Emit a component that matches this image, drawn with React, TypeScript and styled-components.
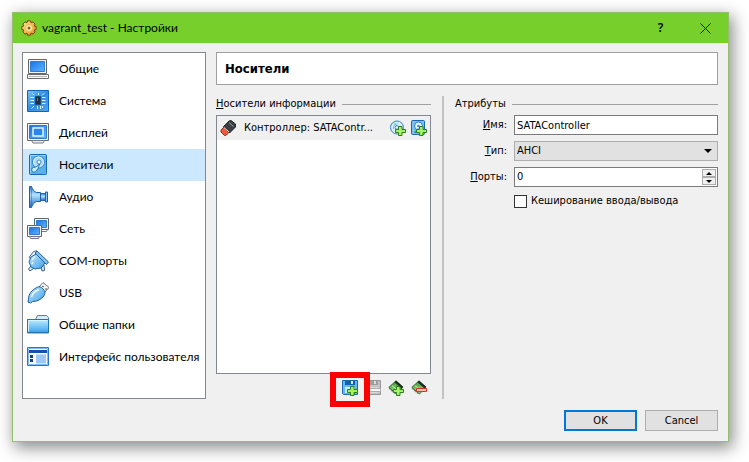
import React, { useState } from "react";
import styled, { createGlobalStyle, css } from "styled-components";

const uiFont = '"DejaVu Sans Condensed", "DejaVu Sans", sans-serif';
const menuFont = 'Lato, "Noto Sans", sans-serif';

const GlobalStyle = createGlobalStyle`
  *, *::before, *::after { box-sizing: border-box; }
  body { margin: 0; background: #fff; }
  svg { display: block; flex: none; }
`;

const Page = styled.div`
  display: flex;
  min-height: 100vh;
  padding: 12px 20px 20px 12px;
`;

const Dialog = styled.section`
  flex: 1;
  min-width: 0;
  display: flex;
  flex-direction: column;
  border: 1px solid #93bf6f;
  background: #f0f0f0;
  box-shadow: 3px 5px 15px 1px rgba(0, 0, 0, 0.45);
  color: #000;
  font: 11px/16px ${uiFont};
`;

const TitleBar = styled.header`
  display: flex;
  align-items: center;
  height: 30px;
  padding-left: 8px;
  background: #76cf2b;
`;

const Title = styled.h1`
  flex: 1;
  margin: 0 0 0 5px;
  font: 12px/16px ${menuFont};
`;

const CaptionButton = styled.button`
  display: grid;
  place-items: center;
  width: 45px;
  height: 30px;
  padding: 0;
  border: 0;
  background: transparent;
  font: 600 12px/16px "Noto Sans", sans-serif;
`;

const Body = styled.div`
  flex: 1;
  display: grid;
  grid-template-columns: 184px minmax(0, 1fr);
  gap: 10px;
  padding: 9px 10px 11px 9px;
`;

const Categories = styled.nav`
  border: 1px solid #828790;
  background: #fff;
`;

const Category = styled.a<{ $active?: boolean }>`
  display: flex;
  align-items: center;
  gap: 10px;
  height: 32px;
  padding-left: 4px;
  background: ${(p) => (p.$active ? "#cce8ff" : "transparent")};
  color: #000;
  font: 12px/16px ${menuFont};
  text-decoration: none;
  white-space: nowrap;
`;

const Settings = styled.main`
  display: flex;
  flex-direction: column;
  gap: 11px;
  min-width: 0;
`;

const PageName = styled.h2`
  height: 33px;
  margin: 0;
  padding: 0 8px;
  border: 1px solid #a0a0a0;
  background: #fff;
  font: bold 13px/32px ${uiFont};
`;

const Panes = styled.div`
  flex: 1;
  display: grid;
  grid-template-columns: 215px 2px minmax(0, 1fr);
  column-gap: 11px;
`;

const Divider = styled.div`
  background: #c3c3c3;
`;

const Pane = styled.div`
  display: flex;
  flex-direction: column;
  min-width: 0;
`;

const PaneTitle = styled.h3`
  display: flex;
  align-items: center;
  gap: 6px;
  height: 16px;
  margin: 0 0 3px;
  font: 11px/16px ${uiFont};
  white-space: nowrap;

  &::after {
    content: "";
    flex: 1;
    height: 1px;
    background: #a0a0a0;
  }
`;

const Tree = styled.div`
  flex: 1;
  border: 1px solid #828790;
  background: #fff;
`;

const TreeRow = styled.div`
  display: flex;
  align-items: center;
  height: 24px;
  padding: 0 3px;
  background: #f0f0f0;
`;

const TreeText = styled.span`
  flex: 1;
  margin-left: 8px;
  white-space: nowrap;
`;

const IconButton = styled.button<{ $marked?: boolean }>`
  position: relative;
  width: 16px;
  height: 16px;
  padding: 0;
  border: 0;
  background: transparent;

  & + & { margin-left: 5px; }

  ${(p) =>
    p.$marked &&
    css`
      z-index: 1;
      &::after {
        content: "";
        position: absolute;
        inset: -8px -12px -11px;
        border: 6px solid #fe0000;
      }
    `}
`;

const ToolBar = styled.div`
  display: flex;
  justify-content: flex-end;
  gap: 2px;
  padding: 6px 4px 3px;
`;

const Form = styled.div`
  display: grid;
  grid-template-columns: 52px minmax(0, 1fr);
  column-gap: 7px;
  row-gap: 6px;
  align-items: center;
`;

const Label = styled.label`
  text-align: right;
  line-height: 20px;
`;

const field = css`
  width: 100%;
  height: 20px;
  margin: 0;
  padding: 0 2px;
  border: 1px solid #7a7a7a;
  border-radius: 0;
  background: #fff;
  color: #000;
  font: 11px/16px ${uiFont};
`;

const TextField = styled.input`
  ${field}
`;

const SelectWrap = styled.div`
  display: grid;
  align-items: center;

  & > * { grid-area: 1 / 1; }
  & > svg { justify-self: end; margin-right: 6px; pointer-events: none; }
`;

const Select = styled.select`
  ${field}
  appearance: none;
  border-color: #adadad;
  background: #e1e1e1;
`;

const Spin = styled.div`
  display: flex;
  height: 20px;
  padding-right: 1px;
  border: 1px solid #7a7a7a;
  background: #fff;
`;

const SpinInput = styled.input`
  flex: 1;
  min-width: 0;
  padding: 0 2px;
  border: 0;
  font: 11px/16px ${uiFont};
  appearance: textfield;

  &::-webkit-inner-spin-button { appearance: none; margin: 0; }
`;

const SpinButtons = styled.div`
  display: grid;
  grid-template-rows: 1fr 1fr;
  width: 14px;
  padding: 1px 0;
`;

const SpinButton = styled.button`
  display: grid;
  place-items: center;
  padding: 0;
  border: 1px solid #adadad;
  background: #f0f0f0;
`;

const CheckLabel = styled.label`
  grid-column: 2;
  display: flex;
  align-items: center;
  gap: 4px;
  white-space: nowrap;
`;

const CheckBox = styled.input`
  appearance: none;
  width: 13px;
  height: 13px;
  margin: 0;
  border: 1px solid #333;
  background: #fff;

  &:checked { box-shadow: inset 0 0 0 2px #fff; background: #333; }
`;

const Footer = styled.footer`
  display: flex;
  justify-content: flex-end;
  gap: 8px;
  padding: 0 10px 10px;
`;

const PushButton = styled.button<{ $default?: boolean }>`
  width: 73px;
  height: 21px;
  padding: 0;
  border: ${(p) => (p.$default ? "2px solid #0078d7" : "1px solid #adadad")};
  background: #e1e1e1;
  color: #000;
  font: 11px/16px ${uiFont};
`;

const Gradients = () => (
  <svg width="0" height="0" aria-hidden="true">
    <defs>
      <linearGradient id="screen" x1="0" y1="0" x2="1" y2="1">
        <stop offset="0" stopColor="#1673e6" />
        <stop offset="1" stopColor="#62b6ff" />
      </linearGradient>
      <linearGradient id="board" x1="0" y1="0" x2="1" y2="1">
        <stop offset="0" stopColor="#7cc4f8" />
        <stop offset=".5" stopColor="#2f8ce0" />
        <stop offset="1" stopColor="#4fa6ee" />
      </linearGradient>
      <linearGradient id="pale" x1="0" y1="0" x2="1" y2="1">
        <stop offset="0" stopColor="#c5ecff" />
        <stop offset="1" stopColor="#3e9ee8" />
      </linearGradient>
      <linearGradient id="folder" x1="0" y1="0" x2="0" y2="1">
        <stop offset="0" stopColor="#c0edff" />
        <stop offset="1" stopColor="#3ba3ee" />
      </linearGradient>
      <linearGradient id="horn" x1="0" y1="0" x2="0" y2="1">
        <stop offset="0" stopColor="#2a78cc" />
        <stop offset=".4" stopColor="#b4e3ff" />
        <stop offset="1" stopColor="#1b66c0" />
      </linearGradient>
      <linearGradient id="gold" x1="0" y1="0" x2="1" y2="1">
        <stop offset="0" stopColor="#ffe995" />
        <stop offset="1" stopColor="#e78a12" />
      </linearGradient>
      <linearGradient id="card" x1="0" y1="0" x2="0" y2="1">
        <stop offset="0" stopColor="#3f9a3a" />
        <stop offset="1" stopColor="#a5dd84" />
      </linearGradient>
    </defs>
  </svg>
);

type IconProps = { children: React.ReactNode; size?: number };
const Icon = ({ children, size = 22 }: IconProps) => (
  <svg width={size} height={size} viewBox={`0 0 ${size} ${size}`} aria-hidden="true">
    {children}
  </svg>
);

const GearIcon = () => (
  <Icon size={16}>
    <path
      d="M6.500.8h3l.5 2 2-.9 2.100 2.100-.9 2 2 .5v3l-2 .5.9 2-2.100 2.100-2-.9-.5 2h-3l-.5-2-2 .9L1.900 12l.9-2-2-.5v-3l2-.5-.9-2L4 1.900l2 .9z"
      fill="url(#gold)"
      stroke="#7a4210"
      strokeLinejoin="round"
    />
    <circle cx="8" cy="8" r="3.500" fill="#ffefb4" stroke="#f0b84a" />
    <circle cx="8" cy="8" r="1.500" fill="#8a5a17" />
  </Icon>
);

const GeneralIcon = () => (
  <Icon>
    <path d="M1.500 1.500h18v14h-18z" fill="#f4f4f4" stroke="#62676c" />
    <path d="M3.500 3.500h14v10h-14z" fill="url(#screen)" stroke="#2f7cd0" />
    <path d="M.5 16.500h21v4H.5z" fill="#f6f6f6" stroke="#6a6d70" />
    <path d="M2 18.500h18" stroke="#b8b8b8" />
  </Icon>
);

const SystemIcon = () => (
  <Icon>
    <path d="M.5 .5h21v21H.5z" fill="url(#board)" stroke="#1263bd" />
    <path
      d="M3.500 7.500H7M3.500 10.500H7M3.500 13.500H7M15 7.500h3.500M15 10.500h3.500M15 13.500h3.500M11.500 3v2M15 5.500L17.500 3M4.500 18.500L7 16M10.500 16v3M13.500 16v3M15.500 16v2M5.500 3.500L7 5"
      stroke="#def4ff"
      fill="none"
    />
    <path d="M8.500 6.500h5v8h-5z" fill="#1f2f40" stroke="#1a4a7c" />
    <path d="M10.500 8v3" stroke="#5f7588" />
  </Icon>
);

const DisplayIcon = () => (
  <Icon>
    <path d="M.5 1.500h21v17H.5z" fill="#f4f4f4" stroke="#62676c" />
    <path d="M2.500 3.500h17v13h-17z" fill="url(#screen)" stroke="#2f7cd0" />
    <path d="M6 6h10v8H6z" fill="#2a86ea" stroke="#e2f5ff" strokeWidth="1.500" />
    <path d="M4.500 18.500h13l-1.500 2.500H6z" fill="#eee" stroke="#77797c" />
  </Icon>
);

const DiskIcon = () => (
  <Icon>
    <rect x="2.500" y=".5" width="17" height="20" rx="1" fill="#5ab0ea" stroke="#1768b5" />
    <path d="M3.500 19V1.500H18" fill="none" stroke="#9bd6fb" />
    <circle cx="11.500" cy="8" r="6" fill="#a9dcf9" stroke="#2f7fc4" />
    <circle cx="11.500" cy="8" r="5" fill="none" stroke="#d9f3ff" />
    <circle cx="12" cy="8" r="2" fill="#fff" stroke="#3f89c9" />
    <path d="M12.500 10c-2 2.500-3.500 3-6 3.500-1.500.5-2.500 2-1.500 3.500s2 1.500 3.500.5c2-1.500 3-3.500 4-7.500z" fill="#c8ecff" stroke="#1f6eb9" />
  </Icon>
);

const AudioIcon = () => (
  <Icon>
    <path d="M13.500 7.500h6v7h-6z" fill="url(#horn)" stroke="#1f66b3" />
    <path d="M18.500 6h2v10h-2z" fill="#8ccaf5" stroke="#1c5fab" />
    <path d="M2.500 .5h2c1 3 2.500 5 5 6h4v9h-4c-2.500 1-4 3-5 6h-2z" fill="url(#horn)" stroke="#1c5fab" strokeLinejoin="round" />
    <path d="M4.500 3v16" stroke="#1d60b0" strokeOpacity=".45" />
  </Icon>
);

const NetworkIcon = () => (
  <Icon>
    <path d="M7.500 .5h14v11h-14z" fill="#f4f4f4" stroke="#62676c" />
    <path d="M9.500 2.500h10v7h-10z" fill="url(#screen)" stroke="#2f7cd0" />
    <path d="M15 13.500h4.500l1-2" fill="none" stroke="#77797c" />
    <path d="M.5 7.500h14v11H.5z" fill="#f4f4f4" stroke="#62676c" />
    <path d="M2.500 9.500h10v7h-10z" fill="url(#screen)" stroke="#2f7cd0" />
    <path d="M2.500 18.500h10l-1 2h-8z" fill="#eee" stroke="#77797c" />
  </Icon>
);

const SerialIcon = () => (
  <Icon>
    <path d="M4 9L2 7.500l4.500-6L10 .8l1 2.200z" fill="#e9eff4" stroke="#4c6b88" />
    <path d="M4 16l-2.500 3 1.500 2 4-3zM14 17l1 4 2.500-.5L17 15z" fill="#d3eaf9" stroke="#35628c" />
    <path d="M2 12l2-5 5-3 9 9-4 5-6 1-4-2z" fill="url(#pale)" stroke="#1f66ab" strokeLinejoin="round" />
    <path d="M8 3l2-2 11.500 11-2 2.500z" fill="#7fc4f2" stroke="#2a5f94" />
    <path d="M5 10l3-3.500M5 14l1-2" stroke="#eaf8ff" fill="none" strokeWidth="1.500" />
  </Icon>
);

const UsbIcon = () => (
  <Icon>
    <path d="M12 5l4-4.500 6 5-4 4.500z" fill="#f8f8f8" stroke="#666c72" />
    <path d="M15.500 4l1 1M18.500 6.500l1 1" stroke="#555" strokeWidth="1.500" />
    <path d="M9 6c2-1.500 4-1.500 5.500-.5l3 3c1 1.500.5 4-1.500 6.500-3 3-6 4.500-10.500 4.500L3.500 21 1 20l.5-3C1.500 12 5 8 9 6z" fill="url(#pale)" stroke="#1c5f9e" />
    <path d="M4.500 15c1-4 4-6 7.500-7.500" stroke="#e8f9ff" fill="none" strokeWidth="1.500" />
  </Icon>
);

const FolderIcon = () => (
  <Icon>
    <path d="M.5 19V5.500h8l2-4h9l2 2V19z" fill="#d5ebf8" stroke="#4c83ad" />
    <path d="M.5 5.500h21v13H.5z" fill="url(#folder)" stroke="#2272b4" />
    <path d="M1.500 17.500v-11H20" fill="none" stroke="#d7f5ff" />
  </Icon>
);

const InterfaceIcon = () => (
  <Icon>
    <path d="M.5 1.500h21v18H.5z" fill="#fff" stroke="#2476ce" />
    <path d="M1.500 2.500h19v16h-19z" fill="none" stroke="#7ebcf7" />
    <path d="M2 4h18v3H2z" fill="#1551ac" />
    <path d="M3 9h3v3H3zM3 13h3v3H3z" fill="#1d3e77" />
    <path d="M9 8.500h10v9H9z" fill="#9bc9fa" />
  </Icon>
);

const ControllerIcon = () => (
  <Icon size={16}>
    <path d="M1 10l3-3 5 5-2.500 3-2 .5L1 12z" fill="#f05a34" stroke="#7c3526" />
    <path d="M3.500 6.500L9 1l2-.5L15.500 4v3L9.500 13z" fill="#3c3f42" stroke="#222527" strokeLinejoin="round" />
    <path d="M9 2.500l4.500 4" stroke="#9da1a4" />
    <path d="M4 7.500l5 4.500" stroke="#ececec" />
  </Icon>
);

const Plus = () => (
  <path d="M8.500 6.500h3.500V9.500h3.500v3H12v3H8.500v-3h-3v-3h3z" fill="#a5f264" stroke="#2b7d22" />
);

const AddOpticalIcon = () => (
  <Icon size={16}>
    <circle cx="7" cy="7.500" r="6.500" fill="#d8efff" stroke="#3b7eb9" />
    <path d="M7 7L2.500 3.500 5 1.800zM7 8l1.500 5.500L5 13z" fill="#9adfc0" />
    <path d="M3.500 9a4 4 0 0 1 4-5" stroke="#76b7e4" fill="none" />
    <circle cx="7" cy="7.500" r="1.800" fill="#fff" stroke="#3b7eb9" />
    <Plus />
  </Icon>
);

const AddDiskIcon = () => (
  <Icon size={16}>
    <rect x=".5" y=".5" width="13" height="14" rx="1" fill="#7cc2f0" stroke="#1667b0" />
    <circle cx="7.500" cy="6" r="4" fill="#e6f7ff" stroke="#2e7dc0" />
    <circle cx="7.500" cy="6" r="1.300" fill="#438bc9" />
    <path d="M7 8.500L3.500 12.500h3z" fill="#e6f7ff" stroke="#2e7dc0" />
    <Plus />
  </Icon>
);

const SaveIcon = ({ disabled }: { disabled?: boolean }) => (
  <Icon size={16}>
    <path
      d="M.5 .5h15v14h-14l-1-1z"
      fill={disabled ? "#c4c4c4" : "#5fbaf5"}
      stroke={disabled ? "#979797" : "#1c69b5"}
    />
    <path d="M3 1h10v4H3z" fill={disabled ? "#9e9e9e" : "#125fae"} />
    <path d="M9 1h2v3H9z" fill={disabled ? "#ddd" : "#d9efff"} />
    <path d="M3 7h10v6H3z" fill={disabled ? "#dadada" : "#c9eeff"} />
    {disabled ? <path d="M.5 8.500h15v3H.5z" fill="#f7f7f7" stroke="#adadad" /> : <Plus />}
  </Icon>
);

const ControllerActionIcon = ({ remove }: { remove?: boolean }) => (
  <Icon size={16}>
    <path d="M8 .8L15 7l-6.500 7L.8 7.500z" fill="url(#card)" stroke="#2c5a2a" strokeLinejoin="round" />
    <path d="M8 .8L15 7l-1.500 1.500L6.500 2.300z" fill="#1f2822" />
    <path d="M4 5.500l5.500 5" stroke="#c4efae" />
    <path d="M1.500 9l5 4.500" stroke="#3a4a3a" strokeDasharray="1 1" />
    {remove ? <path d="M5.500 8.500h10v3h-10z" fill="#ffc4ae" stroke="#dc3420" /> : <Plus />}
  </Icon>
);

const categories = [
  { name: "Общие", icon: GeneralIcon },
  { name: "Система", icon: SystemIcon },
  { name: "Дисплей", icon: DisplayIcon },
  { name: "Носители", icon: DiskIcon },
  { name: "Аудио", icon: AudioIcon },
  { name: "Сеть", icon: NetworkIcon },
  { name: "COM-порты", icon: SerialIcon },
  { name: "USB", icon: UsbIcon },
  { name: "Общие папки", icon: FolderIcon },
  { name: "Интерфейс пользователя", icon: InterfaceIcon },
];

export default function App() {
  const [active, setActive] = useState("Носители");
  const [name, setName] = useState("SATAController");
  const [ports, setPorts] = useState(0);

  return (
    <Page>
      <GlobalStyle />
      <Dialog role="dialog" aria-labelledby="dialog-title">
        <Gradients />
        <TitleBar>
          <GearIcon />
          <Title id="dialog-title">vagrant_test - Настройки</Title>
          <CaptionButton type="button">?</CaptionButton>
          <CaptionButton type="button" aria-label="Закрыть">
            <svg width="11" height="11" viewBox="0 0 11 11" aria-hidden="true">
              <path d="M.5 .5l10 10M10.500 .5l-10 10" stroke="#111" />
            </svg>
          </CaptionButton>
        </TitleBar>

        <Body>
          <Categories>
            {categories.map(({ name: label, icon: CategoryIcon }) => (
              <Category
                key={label}
                href="#"
                $active={label === active}
                onClick={(e) => {
                  e.preventDefault();
                  setActive(label);
                }}
              >
                <CategoryIcon />
                {label}
              </Category>
            ))}
          </Categories>

          <Settings>
            <PageName>{active}</PageName>
            <Panes>
              <Pane>
                <PaneTitle><span><u>Н</u>осители информации</span></PaneTitle>
                <Tree>
                  <TreeRow>
                    <ControllerIcon />
                    <TreeText>Контроллер: SATAContr...</TreeText>
                    <IconButton type="button" aria-label="Добавить привод"><AddOpticalIcon /></IconButton>
                    <IconButton type="button" aria-label="Добавить жёсткий диск"><AddDiskIcon /></IconButton>
                  </TreeRow>
                </Tree>
                <ToolBar>
                  <IconButton type="button" $marked aria-label="Добавить носитель"><SaveIcon /></IconButton>
                  <IconButton type="button" disabled aria-label="Удалить носитель"><SaveIcon disabled /></IconButton>
                  <IconButton type="button" aria-label="Добавить контроллер"><ControllerActionIcon /></IconButton>
                  <IconButton type="button" aria-label="Удалить контроллер"><ControllerActionIcon remove /></IconButton>
                </ToolBar>
              </Pane>

              <Divider />

              <Pane>
                <PaneTitle>Атрибуты</PaneTitle>
                <Form>
                  <Label htmlFor="name"><u>И</u>мя:</Label>
                  <TextField id="name" value={name} onChange={(e) => setName(e.target.value)} />
                  <Label htmlFor="type"><u>Т</u>ип:</Label>
                  <SelectWrap>
                    <Select id="type"><option>AHCI</option></Select>
                    <svg width="8" height="4" viewBox="0 0 8 4" aria-hidden="true"><path d="M0 0h8L4 4z" /></svg>
                  </SelectWrap>
                  <Label htmlFor="ports"><u>П</u>орты:</Label>
                  <Spin>
                    <SpinInput id="ports" type="number" min="0" value={ports} onChange={(e) => setPorts(Number(e.target.value))} />
                    <SpinButtons>
                      <SpinButton type="button" aria-label="Больше" onClick={() => setPorts(ports + 1)}>
                        <svg width="6" height="3" viewBox="0 0 6 3"><path d="M0 3h6L3 0z" /></svg>
                      </SpinButton>
                      <SpinButton type="button" aria-label="Меньше" onClick={() => setPorts(Math.max(0, ports - 1))}>
                        <svg width="6" height="3" viewBox="0 0 6 3"><path d="M0 0h6L3 3z" /></svg>
                      </SpinButton>
                    </SpinButtons>
                  </Spin>
                  <CheckLabel>
                    <CheckBox type="checkbox" />
                    Кеширование ввода/вывода
                  </CheckLabel>
                </Form>
              </Pane>
            </Panes>
          </Settings>
        </Body>

        <Footer>
          <PushButton type="button" $default>OK</PushButton>
          <PushButton type="button">Cancel</PushButton>
        </Footer>
      </Dialog>
    </Page>
  );
}
